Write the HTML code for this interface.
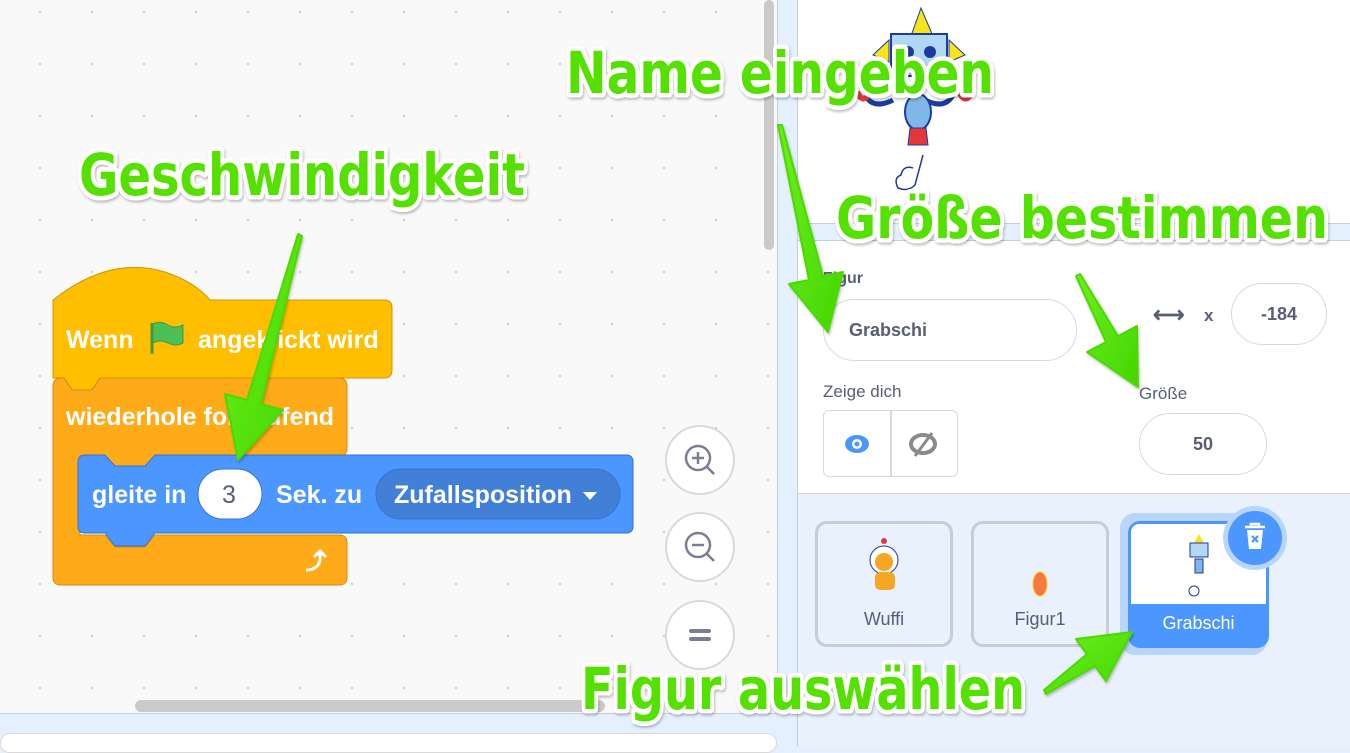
<!DOCTYPE html>
<html><head><meta charset="utf-8"><style>
*{margin:0;padding:0;box-sizing:border-box}
body{width:1350px;height:746px;overflow:hidden;position:relative;font-family:"Liberation Sans",sans-serif;background:#e5f0ff}
.abs{position:absolute}
#code{left:0;top:0;width:778px;height:714px;background-color:#f9f9f9;background-image:radial-gradient(circle,#d6d6d6 1.2px,transparent 1.6px);background-size:52px 52px;background-position:14px 246px;border-right:1px solid #c4cfdd;border-bottom:1px solid #c4cfdd}
.t{color:#fff;font-weight:bold;font-size:25px;position:absolute;white-space:nowrap}
.zoom{width:70px;height:70px;border-radius:50%;background:#fff;border:2px solid #d9d9d9;position:absolute;left:665px}
#right{left:797px;top:0;width:553px;height:746px;border-left:1px solid #c4cfdd}
.pill{position:absolute;background:#fff;border:1.5px solid #d9d9d9;border-radius:32px;color:#575e75;font-weight:bold;font-size:18px;display:flex;align-items:center}
.card{position:absolute;top:521px;width:138px;height:126px;border:3px solid #c6ccd8;border-radius:12px;background:#e9f1fc;font-size:18px;color:#575e75;text-align:center}
</style></head><body>
<div id="code" class="abs">
 <div class="abs" style="left:764px;top:0;width:10px;height:250px;background:#cacaca;border-radius:5px"></div>
 <div class="abs" style="left:135px;top:700px;width:470px;height:12px;background:#cacaca;border-radius:6px"></div>
 <svg class="abs" style="left:0;top:0" width="778" height="714">
  <path d="M53 300 Q110 255 165 272 Q195 282 210 300 L384 300 Q392 300 392 308 L392 370 Q392 378 384 378 L100 378 L92 390 L72 390 L64 378 L53 378 Z" fill="#ffbf00" stroke="#cc9900"/>
  <path d="M53 386 Q53 378 61 378 L64 378 L72 390 L92 390 L100 378 L339 378 Q347 378 347 386 L347 448 Q347 456 339 456 L155 456 L145 466 L115 466 L105 456 L80 456 L80 535 L105 535 L115 547 L145 547 L155 535 L339 535 Q347 535 347 543 L347 577 Q347 585 339 585 L61 585 Q53 585 53 577 Z" fill="#ffab19" stroke="#cf8b17"/>
  <path d="M78 462 Q78 455 85 455 L105 455 L115 466 L145 466 L155 455 L626 455 Q633 455 633 462 L633 526 Q633 533 626 533 L155 533 L145 546 L115 546 L105 533 L85 533 Q78 533 78 526 Z" fill="#4c97ff" stroke="#3373cc"/>
  <rect x="198" y="469" width="64" height="50" rx="25" fill="#fff" stroke="#3373cc"/>
  <rect x="376" y="469" width="244" height="50" rx="25" fill="#4280d7" stroke="#3373cc"/>
  <path d="M583 492 L597 492 L590 500Z" fill="#fff"/>
  <path d="M152 323 L152 354" stroke="#45993d" stroke-width="3"/>
  <path d="M153 324 Q160 320 168 325 Q175 329 183 325 L183 343 Q175 347 168 343 Q160 339 153 343Z" fill="#4cbf56" stroke="#45993d"/>
  <path d="M306 570 Q318 570 320 560 L320 552 M314 557 L320 551 L326 557" fill="none" stroke="#fff" stroke-width="3"/>
 </svg>
 <div class="t" style="left:66px;top:326px">Wenn</div>
 <div class="t" style="left:198px;top:326px">angeklickt wird</div>
 <div class="t" style="left:66px;top:403px">wiederhole fortlaufend</div>
 <div class="t" style="left:92px;top:481px">gleite in</div>
 <div class="t" style="left:222px;top:481px;color:#575e75;font-weight:normal">3</div>
 <div class="t" style="left:276px;top:481px">Sek. zu</div>
 <div class="t" style="left:394px;top:481px">Zufallsposition</div>
 <div class="zoom" style="top:425px"><svg width="66" height="66"><circle cx="31" cy="31" r="12" fill="none" stroke="#7a7f95" stroke-width="2.5"/><path d="M25 31h12M31 25v12M40 40l7 7" stroke="#7a7f95" stroke-width="2.5"/></svg></div>
 <div class="zoom" style="top:512px"><svg width="66" height="66"><circle cx="31" cy="31" r="12" fill="none" stroke="#7a7f95" stroke-width="2.5"/><path d="M25 31h12M40 40l7 7" stroke="#7a7f95" stroke-width="2.5"/></svg></div>
 <div class="zoom" style="top:600px"><svg width="66" height="66"><path d="M24 29h18M24 37h18" stroke="#7a7f95" stroke-width="4" stroke-linecap="round"/></svg></div>
</div>
<div class="abs" style="left:0;top:733px;width:777px;height:20px;background:#fff;border:1px solid #d9d9d9;border-radius:10px"></div>

<div id="right" class="abs" style="background:#fff">
 <div class="abs" style="left:0;top:223px;width:553px;height:18px;background:#e5f0ff;border-top:1px solid #c4cfdd;border-bottom:1px solid #c4cfdd"></div>
 <div class="abs" style="left:0;top:493px;width:553px;height:253px;background:#e9f1fc;border-top:1px solid #d9d9d9"></div>
 <svg class="abs" style="left:55px;top:0" width="120" height="200">
  <path d="M68 8 L58 36 L80 36Z" fill="#f7e41b" stroke="#1d3b9e"/>
  <path d="M36 40 L20 55 L36 62Z M96 40 L112 55 L96 62Z" fill="#f7e41b" stroke="#1d3b9e"/>
  <rect x="38" y="34" width="56" height="42" fill="#b2d7f4" stroke="#1d3b9e" stroke-width="2"/>
  <circle cx="55" cy="52" r="6" fill="#1d3b9e"/><circle cx="77" cy="52" r="6" fill="#1d3b9e"/>
  <path d="M12 95 Q20 110 40 100 M100 95 Q92 110 72 100" stroke="#1d3b9e" stroke-width="5" fill="none"/>
  <path d="M4 92 Q10 104 16 94 M106 92 Q112 104 118 94" stroke="#e5363c" stroke-width="6" fill="none"/>
  <ellipse cx="65" cy="112" rx="13" ry="18" fill="#7fb7e8" stroke="#1d3b9e" stroke-width="2"/>
  <path d="M57 128 L73 128 L75 145 L55 145Z" fill="#e5363c" stroke="#1d3b9e"/>
  <path d="M60 168 Q50 165 48 175 Q40 178 45 188 Q55 192 62 185 L70 155" fill="none" stroke="#1d3b9e" stroke-width="1.5"/>
 </svg>
 <div class="abs" style="left:25px;top:270px;font-size:16px;color:#575e75;font-weight:bold">Figur</div>
 <div class="pill" style="left:25px;top:299px;width:254px;height:62px;padding-left:25px">Grabschi</div>
 <div class="abs" style="left:355px;top:302px;font-size:22px;color:#575e75;font-weight:bold">⟷</div>
 <div class="abs" style="left:406px;top:306px;font-size:17px;color:#575e75;font-weight:bold">x</div>
 <div class="pill" style="left:433px;top:283px;width:96px;height:62px;justify-content:center">-184</div>
 <div class="abs" style="left:25px;top:382px;font-size:17px;color:#575e75">Zeige dich</div>
 <div class="abs" style="left:25px;top:410px;width:135px;height:67px;border:1.5px solid #d9d9d9;border-radius:6px;background:#fff"><div class="abs" style="left:66px;top:0;width:2px;height:65px;background:#d9d9d9"></div>
  <svg class="abs" style="left:18px;top:20px" width="30" height="26"><ellipse cx="15" cy="13" rx="12" ry="9" fill="#4c97ff"/><circle cx="15" cy="13" r="5" fill="#fff"/><circle cx="15" cy="13" r="2.5" fill="#4c97ff"/></svg>
  <svg class="abs" style="left:84px;top:18px" width="30" height="30"><ellipse cx="15" cy="15" rx="12" ry="9" fill="none" stroke="#8a8a8a" stroke-width="4"/><path d="M24 4 L7 27" stroke="#8a8a8a" stroke-width="3"/></svg>
 </div>
 <div class="abs" style="left:341px;top:384px;font-size:17px;color:#575e75">Größe</div>
 <div class="pill" style="left:341px;top:413px;width:128px;height:62px;justify-content:center">50</div>
 <div class="card" style="left:17px"><svg style="margin-top:12px" width="50" height="64"><circle cx="25" cy="5" r="3" fill="#e5363c"/><circle cx="25" cy="24" r="14" fill="#fff" stroke="#1d3b9e"/><circle cx="25" cy="26" r="9" fill="#f5a623"/><rect x="16" y="36" width="20" height="18" rx="5" fill="#f5a623"/></svg><div style="margin-top:4px">Wuffi</div></div>
 <div class="card" style="left:173px"><svg style="margin-top:12px" width="50" height="64"><ellipse cx="25" cy="48" rx="7" ry="12" fill="#f77a3a" stroke="#f7c21b"/></svg><div style="margin-top:4px">Figur1</div></div>
 <div class="abs" style="left:322px;top:513px;width:147px;height:142px;border-radius:15px;background:#b8d5fd"></div>
 <div class="abs" style="left:330px;top:521px;width:141px;height:127px;border-radius:12px;background:#4c97ff;border:3px solid #4c97ff;text-align:center;color:#fff;font-size:18px"><div style="background:#fff;height:80px;border-radius:8px 8px 0 0"><svg width="50" height="75" style="margin-top:5px"><path d="M25 5 L20 14 L30 14Z" fill="#f7e41b"/><rect x="16" y="14" width="18" height="14" fill="#b2d7f4" stroke="#1d3b9e"/><rect x="21" y="30" width="8" height="14" fill="#7fb7e8" stroke="#1d3b9e"/><circle cx="20" cy="62" r="5" fill="none" stroke="#1d3b9e"/></svg></div><div style="margin-top:9px">Grabschi</div></div>
 <div class="abs" style="left:425px;top:506px;width:64px;height:64px;border-radius:50%;background:#b8d5fd"></div>
 <div class="abs" style="left:430px;top:511px;width:54px;height:54px;border-radius:50%;background:#4c97ff"><svg width="54" height="54"><path d="M17 16h20M23 16v-3h8v3" stroke="#fff" stroke-width="2.5" fill="none"/><path d="M19 19h16l-2 19h-12Z" fill="#fff"/><path d="M24 25l6 6M30 25l-6 6" stroke="#4c97ff" stroke-width="2.2"/></svg></div>
</div>

<svg class="abs" style="left:0;top:0" width="1350" height="746">
 <defs><linearGradient id="g" x1="0" y1="0" x2="1" y2="1"><stop offset="0" stop-color="#6cf020"/><stop offset="1" stop-color="#44d600"/></linearGradient>
 <filter id="s"><feDropShadow dx="1" dy="2" stdDeviation="1.2" flood-color="#000" flood-opacity="0.25"/></filter></defs>
 <g fill="url(#g)" filter="url(#s)" stroke="#4cd900" stroke-width="2" stroke-linejoin="round">
  <path d="M302 236 L261 404 L283 410 L238 460 L225 394 L247 400 L298 234Z"/>
  <path d="M782 125 L823 276 L843 272 L828 332 L789 284 L809 280 L778 125Z"/>
  <path d="M1080 274 L1118 336 L1137 326 L1138 387 L1087 352 L1106 342 L1076 276Z"/>
  <path d="M1046 694 L1095 666 L1106 681 L1132 632 L1076 639 L1087 654 L1044 690Z"/>
 </g>
 <g font-family="DejaVu Sans, sans-serif" font-weight="bold" font-size="58" fill="#55e100" stroke="#fff" stroke-width="9" stroke-linejoin="round" paint-order="stroke" filter="url(#s)">
  <text x="566" y="93" textLength="428" lengthAdjust="spacingAndGlyphs">Name eingeben</text>
  <text x="79" y="195" textLength="446" lengthAdjust="spacingAndGlyphs">Geschwindigkeit</text>
  <text x="836" y="238" textLength="492" lengthAdjust="spacingAndGlyphs">Größe bestimmen</text>
  <text x="581" y="709" textLength="444" lengthAdjust="spacingAndGlyphs">Figur auswählen</text>
 </g>
</svg>
</body></html>
